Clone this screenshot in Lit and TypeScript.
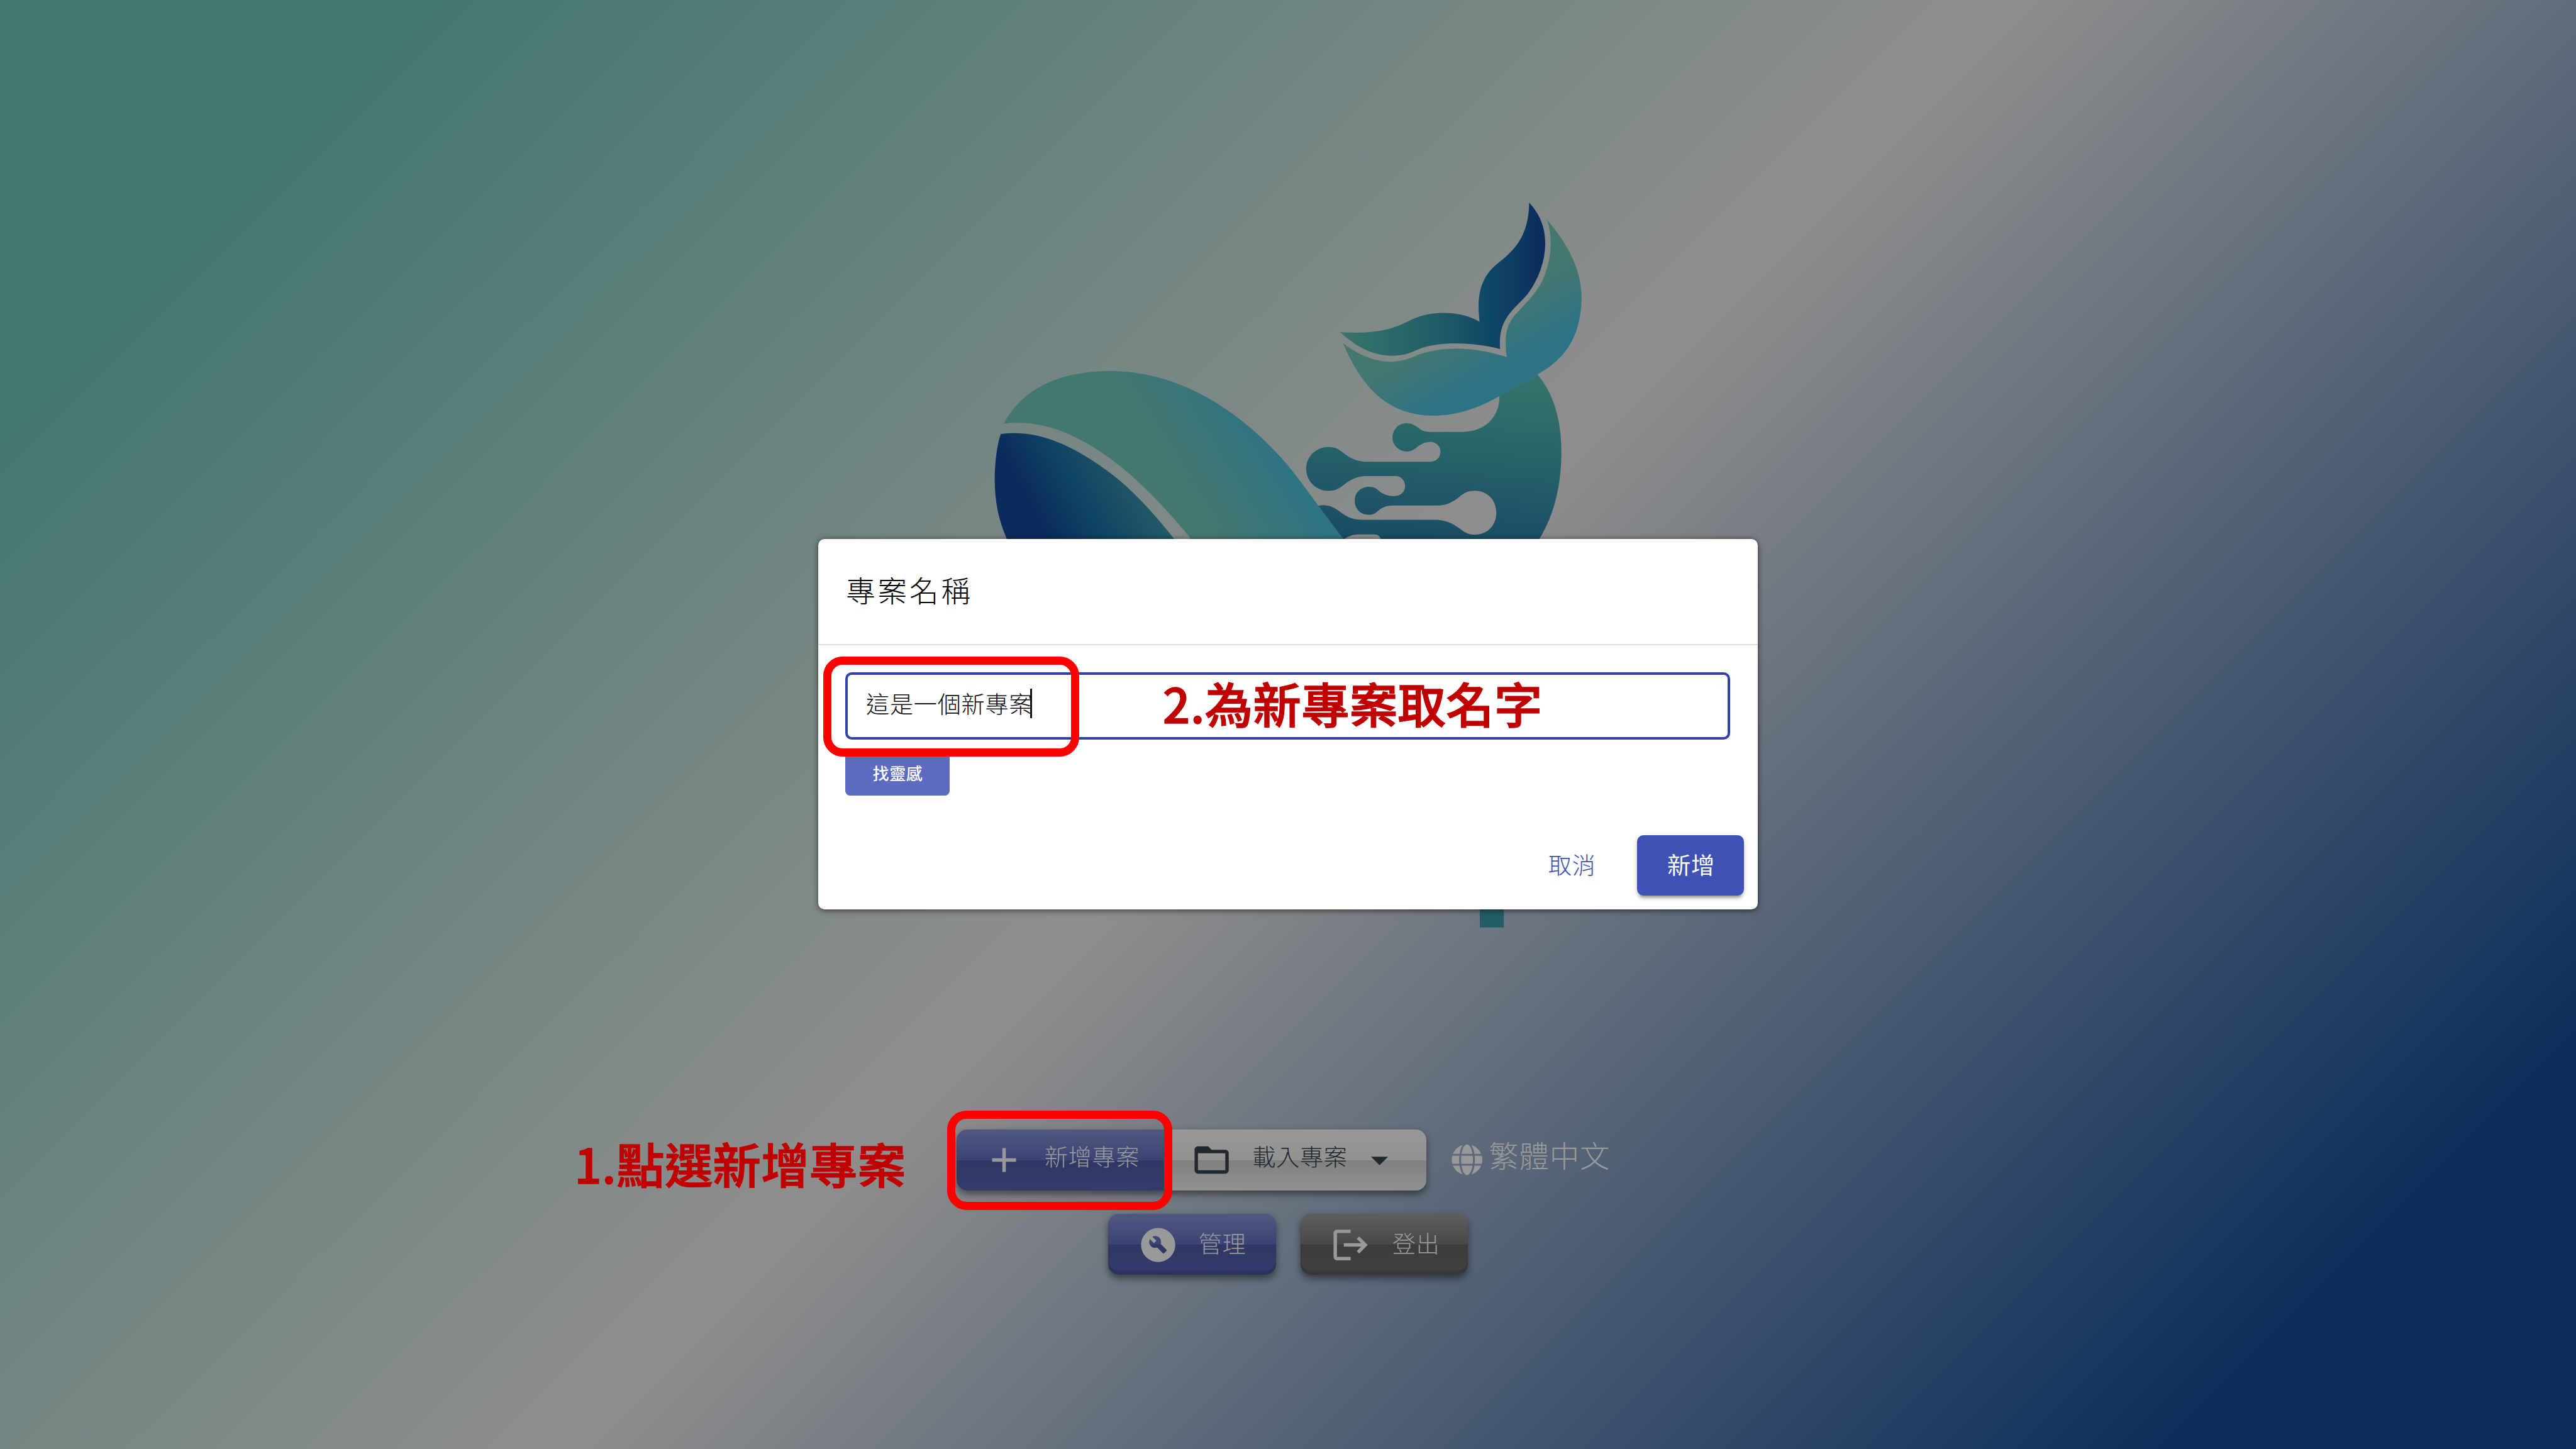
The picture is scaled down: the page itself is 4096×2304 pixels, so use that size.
import { LitElement, html, css } from "lit";
import { customElement, property } from "lit/decorators.js";

const ICONS: Record<string, string> = {
  plus: "M19 13h-6v6h-2v-6H5v-2h6V5h2v6h6v2z",
  folder:
    "M20 18H4V8h16m0-2h-8l-2-2H4c-1.11 0-2 .89-2 2v12c0 1.11.89 2 2 2h16c1.11 0 2-.89 2-2V8c0-1.11-.89-2-2-2z",
  caret: "M7 10l5 5 5-5H7z",
  wrench:
    "M12 2C6.48 2 2 6.48 2 12s4.48 10 10 10 10-4.48 10-10S17.52 2 12 2zm4.9 13.49l-1.4 1.4c-.2.2-.51.2-.71 0l-3.41-3.41c-1.22.43-2.64.17-3.62-.81-1.11-1.11-1.3-2.79-.59-4.1l2.35 2.35 1.41-1.41-2.35-2.34c1.32-.71 2.99-.52 4.1.59.98.98 1.24 2.4.81 3.62l3.41 3.41c.2.19.2.51 0 .7z",
  logout:
    "M17 7l-1.41 1.41L18.17 11H8v2h10.17l-2.58 2.58L17 17l5-5zM4 5h8V3H4c-1.1 0-2 .9-2 2v14c0 1.1.9 2 2 2h8v-2H4V5z",
};

const GLOBE =
  "M336.5 160C322 70.7 287.8 8 248 8s-74 62.7-88.5 152h177zM152 256c0 22.2 1.2 43.5 3.3 64h185.3c2.1-20.5 3.3-41.8 3.3-64s-1.2-43.5-3.3-64H155.3c-2.1 20.5-3.3 41.8-3.3 64zm324.7-96c-28.6-67.9-86.5-120.4-158-141.6 24.4 33.8 41.2 84.7 50 141.6h108zM177.2 18.4C105.8 39.6 47.8 92.1 19.3 160h108c8.7-56.9 25.5-107.8 49.9-141.6zM487.4 192H372.7c2.1 21 3.3 42.5 3.3 64s-1.2 43-3.3 64h114.6c5.5-20.5 8.6-41.8 8.6-64s-3.1-43.5-8.5-64zM120 256c0-21.5 1.2-43 3.3-64H8.6C3.2 212.5 0 233.8 0 256s3.2 43.5 8.6 64h114.6c-2-21-3.2-42.5-3.2-64zm39.5 96c14.5 89.3 48.7 152 88.5 152s74-62.7 88.5-152h-177zm159.3 141.6c71.4-21.2 129.4-73.7 158-141.6h-108c-8.8 56.9-25.6 107.8-50 141.6zM19.3 352c28.6 67.9 86.5 120.4 158 141.6-24.4-33.8-41.2-84.7-50-141.6h-108z";

@customElement("ui-icon")
class UiIcon extends LitElement {
  @property() name = "plus";
  static styles = css`
    :host { display: block; width: 70px; height: 70px; flex: none; }
    .glyph { display: block; width: 100%; height: 100%; fill: currentColor; }
  `;
  render() {
    return html`<svg class="glyph" viewBox="0 0 24 24"><path d=${ICONS[this.name]}></path></svg>`;
  }
}

@customElement("whale-logo")
class WhaleLogo extends LitElement {
  static styles = css`
    :host { display: block; width: 1080px; height: 1280px; }
    .art { display: block; width: 100%; height: 100%; }
  `;
  render() {
    return html`<svg class="art" viewBox="1660 320 1080 1280">
      <defs>
        <linearGradient id="fin" gradientUnits="userSpaceOnUse" x1="259" y1="0" x2="1277" y2="0">
          <stop offset="0" stop-color="#3b756a"></stop>
          <stop offset=".24" stop-color="#2b6a69"></stop>
          <stop offset=".5" stop-color="#205a67"></stop>
          <stop offset=".73" stop-color="#0f4665"></stop>
          <stop offset=".87" stop-color="#0e3a62"></stop>
          <stop offset="1" stop-color="#0c295b"></stop>
        </linearGradient>
        <linearGradient id="fluke" gradientUnits="userSpaceOnUse" x1="412" y1="824" x2="536" y2="1072">
          <stop offset="0" stop-color="#437770"></stop>
          <stop offset="1" stop-color="#2d7286"></stop>
        </linearGradient>
        <linearGradient id="body" gradientUnits="userSpaceOnUse" x1="900" y1="820" x2="850" y2="1530">
          <stop offset="0" stop-color="#35726a"></stop>
          <stop offset=".35" stop-color="#2a6769"></stop>
          <stop offset=".7" stop-color="#215967"></stop>
          <stop offset="1" stop-color="#194c65"></stop>
        </linearGradient>
        <linearGradient id="back" gradientUnits="userSpaceOnUse" x1="463" y1="-289" x2="866" y2="-541">
          <stop offset="0" stop-color="#437770"></stop>
          <stop offset="1" stop-color="#307382"></stop>
        </linearGradient>
        <linearGradient id="belly" gradientUnits="userSpaceOnUse" x1="-127" y1="71" x2="361" y2="-200">
          <stop offset="0" stop-color="#0c2a5b"></stop>
          <stop offset=".44" stop-color="#0e4464"></stop>
          <stop offset=".76" stop-color="#1d5065"></stop>
          <stop offset="1" stop-color="#225b68"></stop>
        </linearGradient>
      </defs>
      <g transform="translate(2200 320) scale(.34439 .39541)">
        <path fill="url(#body)" d="M1238 808C1320 890 1357 1010 1357 1140C1357 1290 1320 1420 1240 1530L465 1530C460 1507 447 1499 430 1499L345 1499C320 1500 300 1507 278 1520L130 1376L153 1375C200 1366 235 1385 260 1402C295 1425 325 1436 370 1436L740 1436C790 1438 825 1455 855 1475C880 1493 900 1500 926 1500C990 1500 1034 1460 1034 1405C1034 1350 990 1310 926 1310C900 1310 875 1318 850 1337C815 1362 785 1373 740 1374L520 1374C485 1374 465 1385 445 1399C430 1412 418 1414 400 1414C360 1414 332 1388 332 1353C332 1318 362 1293 403 1293C430 1293 440 1302 460 1316C480 1328 500 1333 530 1333C560 1333 582 1315 582 1290C580 1265 562 1247 535 1247L385 1247C340 1248 305 1265 270 1290C248 1305 230 1311 200 1311C140 1311 91 1268 91 1215C91 1163 140 1121 200 1121C230 1121 250 1128 270 1143C305 1168 340 1183 385 1185L710 1185C740 1183 757 1163 757 1142C757 1118 735 1100 707 1099C680 1100 655 1110 635 1127C615 1140 600 1141 590 1141C550 1140 519 1112 519 1080C520 1045 550 1018 590 1018C615 1018 630 1028 650 1040C665 1051 680 1056 700 1056L870 1056C970 1054 1050 1000 1050 902Z"></path>
        <path fill="url(#fluke)" d="M274 673C360 730 440 753 510 753C570 751 600 742 640 725C750 690 900 680 1086 733C1072 640 1085 595 1125 553C1170 510 1230 460 1262 405C1310 310 1315 220 1286 140C1380 235 1457 350 1457 475C1455 640 1380 740 1238 808C1170 840 1110 875 1050 902C950 950 850 985 725 986C500 985 370 870 274 673Z"></path>
        <path fill="url(#fin)" d="M259 625C400 633 500 622 600 577C700 530 850 530 951 580C938 480 948 400 1030 336C1120 275 1195 215 1197 65C1260 125 1277 185 1277 245C1275 320 1245 395 1190 460C1130 525 1040 560 1053 698C930 670 750 660 640 702C600 718 570 727 510 727C420 725 340 690 259 625Z"></path>
      </g>
      <g transform="translate(1670 600) scale(.33333)">
        <path fill="url(#back)" d="M134 371C230 190 420 101 680 101C1000 101 1310 270 1560 550C1640 640 1700 730 1747 791L1885 976L1107 976L1096 963C1000 845 860 690 720 580C550 445 370 360 190 366C170 366 150 368 134 371Z"></path>
        <path fill="url(#belly)" d="M119 424C270 405 440 440 700 638C820 735 920 850 1009 963L1019 976L157 976L151 963C105 860 87 760 88 640C90 560 100 480 119 424Z"></path>
      </g>
      <rect x="2528" y="1540" width="41" height="44" fill="#235d66"></rect>
    </svg>`;
  }
}

@customElement("name-dialog")
class NameDialog extends LitElement {
  static styles = css`
    :host {
      display: flex; flex-direction: column; box-sizing: border-box;
      width: 1604px; height: 632px; background: #fff; border-radius: 11px;
      box-shadow: 0 2px 10px rgba(0, 0, 0, .55);
    }
    .title {
      flex: none; height: 181px; box-sizing: border-box; padding: 0 0 7px 47px;
      display: flex; align-items: center; border-bottom: 3px solid #e0e0e0;
      font-size: 50px; letter-spacing: 4.2px; color: #000; font-weight: 300;
    }
    .content { padding: 46px 46.5px 0 46px; display: flex; flex-direction: column; align-items: flex-start; }
    .field {
      width: 100%; height: 115px; box-sizing: border-box; border: 5px solid #2f40ad;
      border-radius: 11px; padding: 0 0 8px 31px; display: flex; align-items: center;
      font-size: 40px; letter-spacing: .7px; color: #111; font-weight: 300;
    }
    .cursor { width: 3px; height: 50px; background: #111; margin-left: -4px; }
    .inspire {
      margin-top: 19px; width: 178px; height: 77px; box-sizing: border-box; padding: 0 0 1px 1px;
      display: flex; align-items: center; justify-content: center; background: #5c6bc0;
      border-radius: 8px; color: #fff; font-size: 28px; letter-spacing: .6px; font-weight: 500;
    }
    .actions { margin-top: auto; padding: 0 23px 23px 0; display: flex; justify-content: flex-end; }
    .action {
      height: 103px; box-sizing: border-box; display: flex; align-items: center; justify-content: center;
      padding: 0 0 4px 2px; font-size: 40px; letter-spacing: .7px; border-radius: 11px;
    }
    .cancel { width: 180px; margin-right: 22px; color: #3f51b5; font-weight: 300; }
    .create {
      width: 183px; background: #3f51b5; color: #fff;
      box-shadow: 0 8px 3px -5px rgba(0, 0, 0, .2), 0 5px 6px rgba(0, 0, 0, .14), 0 3px 13px rgba(0, 0, 0, .12);
    }
  `;
  render() {
    return html`
      <div class="title">專案名稱</div>
      <div class="content">
        <div class="field">這是一個新專案<span class="cursor"></span></div>
        <div class="inspire">找靈感</div>
      </div>
      <div class="actions">
        <div class="action cancel">取消</div>
        <div class="action create">新增</div>
      </div>
    `;
  }
}

@customElement("app-root")
class AppRoot extends LitElement {
  static styles = css`
    :host {
      display: block; width: 4096px; height: 2304px; overflow: hidden;
      font-family: "Noto Sans CJK TC", "Noto Sans", sans-serif;
    }
    .page {
      position: relative; zoom: 0.930909; width: 4400px; height: 2475px; box-sizing: border-box;
      padding-top: 320px; display: flex; flex-direction: column; align-items: center; overflow: hidden;
      background: linear-gradient(135deg, #437770 10%, #8f8e8d 50%, #0c2d5a 90%);
      line-height: 1; white-space: nowrap;
    }
    .row { display: flex; align-items: center; height: 104px; flex: none; }
    .row-main { margin-top: 329px; width: 1132px; }
    .row-second { margin-top: 40px; gap: 41px; }
    .group { display: flex; border-radius: 18px; box-shadow: 0 6px 12px rgba(0, 0, 0, .45); }
    .btn {
      height: 104px; box-sizing: border-box; display: flex; align-items: center; gap: 34px;
      font-size: 40px; letter-spacing: .7px; font-weight: 300; color: #999; border-radius: 18px;
    }
    .label { padding-bottom: 11px; }
    .primary { background: linear-gradient(#51597f 0%, #3b4376 50%, #2f3763 50%, #343c6d 100%); }
    .add { width: 366px; padding-left: 46px; border-radius: 18px 0 0 18px; }
    .load {
      width: 436px; padding-left: 35px; border-radius: 0 18px 18px 0; color: #1f292e;
      background: linear-gradient(#979797 0%, #929292 50%, #808080 50%, #919191 100%);
    }
    .caret { margin-left: -14px; }
    .admin, .logout {
      padding-top: 2px;
      box-shadow: 0 6px 12px rgba(0, 0, 0, .45), inset 0 -7px 2px rgba(0, 0, 0, .15);
    }
    .row-second .label { padding-bottom: 6px; }
    .admin { width: 287px; padding-left: 50px; }
    .logout {
      width: 286px; padding-left: 51px; gap: 36px;
      background: linear-gradient(#5e5e5e 0%, #484848 50%, #3b3b3b 50%, #424242 100%);
    }
    .language {
      margin-left: 43px; display: flex; align-items: center; gap: 11px; color: #999;
      font-size: 51px; letter-spacing: .8px; font-weight: 300;
    }
    .language .label { padding-bottom: 17px; }
    .globe { display: block; width: 53px; height: 54px; fill: currentColor; }
    .dialog { position: absolute; left: 1398px; top: 921px; }
    .frame { position: absolute; box-sizing: border-box; border: 14px solid #f00; border-radius: 33px; }
    .frame-add { left: 1618px; top: 1897px; width: 384px; height: 170px; }
    .frame-name { left: 1406px; top: 1122px; width: 437px; height: 170px; }
    .note { position: absolute; color: #c00000; font-size: 82px; letter-spacing: .4px; font-weight: 500; -webkit-text-stroke: 1.5px #c00000; }
    .note-add { left: 981px; top: 1945px; }
    .note-name { left: 1986px; top: 1159px; }
  `;
  render() {
    return html`
      <div class="page">
        <whale-logo></whale-logo>
        <div class="row row-main">
          <div class="group">
            <div class="btn primary add"><ui-icon name="plus"></ui-icon><span class="label">新增專案</span></div>
            <div class="btn load">
              <ui-icon name="folder"></ui-icon><span class="label">載入專案</span>
              <ui-icon class="caret" name="caret"></ui-icon>
            </div>
          </div>
          <div class="language">
            <svg class="globe" viewBox="0 0 496 512"><path d=${GLOBE}></path></svg>
            <span class="label">繁體中文</span>
          </div>
        </div>
        <div class="row row-second">
          <div class="btn primary admin"><ui-icon name="wrench"></ui-icon><span class="label">管理</span></div>
          <div class="btn logout"><ui-icon name="logout"></ui-icon><span class="label">登出</span></div>
        </div>
        <name-dialog class="dialog"></name-dialog>
        <div class="frame frame-add"></div>
        <div class="frame frame-name"></div>
        <div class="note note-add">1.點選新增專案</div>
        <div class="note note-name">2.為新專案取名字</div>
      </div>
    `;
  }
}
